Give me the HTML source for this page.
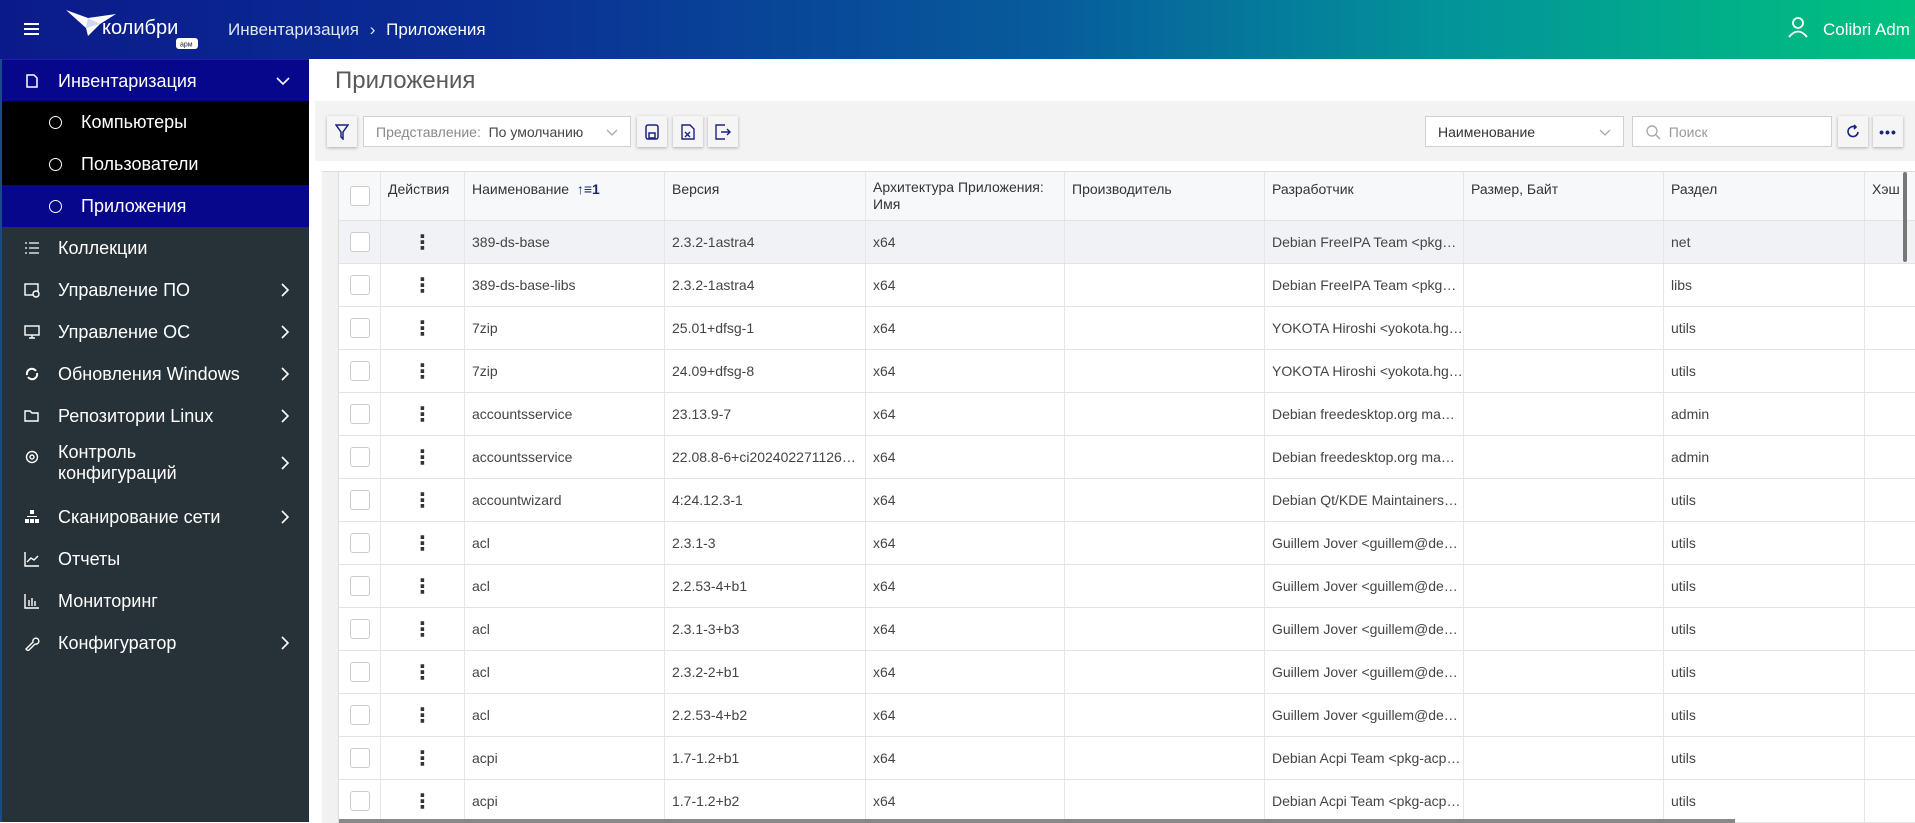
<!DOCTYPE html>
<html><head><meta charset="utf-8"><style>
*{box-sizing:border-box;margin:0;padding:0}
body{width:1915px;height:822px;overflow:hidden;font-family:"Liberation Sans","DejaVu Sans",sans-serif;background:#fff;position:relative}
.hdr{position:absolute;left:0;top:0;width:1915px;height:59px;background:linear-gradient(90deg,#0b1a8a 0%,#0a2e94 25%,#075c9c 55%,#03929a 75%,#00c27e 100%);color:#fff}
.side{position:absolute;left:0;top:59px;width:309px;height:763px;background:#263238;color:#fff;border-left:2px solid #1a4a8a}
.it{position:absolute;left:0;width:307px;height:42px;font-size:18px;display:flex;align-items:center;padding-left:56px}
.it .ic{position:absolute;left:22px;top:50%;transform:translateY(-50%);width:16px;height:16px}
.it .ch{position:absolute;left:278px;top:50%;transform:translateY(-50%);width:10px;height:16px}
.sub{padding-left:79px}
.sub:before{content:"";position:absolute;left:47px;top:15px;width:11px;height:11px;border:1.6px solid #fff;border-radius:50%}
.tb{position:absolute;left:315px;top:101px;width:1600px;height:60px;background:#f3f3f3}
.btn{position:absolute;top:116px;width:30px;height:31px;background:#f5f5f5;box-shadow:0 1px 3px rgba(0,0,0,.3);display:flex;align-items:center;justify-content:center}
.inp{position:absolute;top:116px;height:31px;background:#fff;border:1px solid #d0d0d0;font-size:14px;color:#444;display:flex;align-items:center;padding-left:12px}
.tbl{position:absolute;left:322px;top:171px;width:1593px;height:651px;border-top:1px solid #ddd}
.row{position:absolute;left:17px;width:1576px;height:43px;border-bottom:1px solid #e3e3e3;font-size:14px;color:#444}
.c{position:absolute;top:0;height:100%;border-right:1px solid #e6e6e6;padding-left:7px;display:flex;align-items:center;white-space:nowrap;overflow:hidden}
.hr .c{align-items:flex-start;padding-top:9px}
.cb{width:20px;height:20px;border:1px solid #ccc;border-radius:3px;background:#fff}
.dots{font-size:20px;font-weight:bold;color:#333}
</style></head><body>
<div class="hdr">
 <div style="position:absolute;left:24px;top:23px;width:15px;height:2px;background:#fff;box-shadow:0 5px 0 #fff,0 10px 0 #fff"></div>
 <svg style="position:absolute;left:66px;top:8px" width="136" height="42" viewBox="0 0 136 42"><path d="M0 2 L22 10 L50 6 L34 16 L22 28 L20 20 Z" fill="#fff"/><path d="M22 10 L34 16 L20 20Z" fill="#cfd8f0"/><text x="36" y="26" font-size="20" fill="#fff" font-family="Liberation Sans, sans-serif">колибри</text><rect x="110" y="30" width="22" height="11" rx="3" fill="#fff"/><text x="114" y="38.5" font-size="7" fill="#223">арм</text></svg>
 <div style="position:absolute;left:228px;top:20px;font-size:17px;color:#dfe6f5">Инвентаризация <span style="margin:0 6px">&#8250;</span> <span style="color:#fff">Приложения</span></div>
 <svg style="position:absolute;left:1787px;top:16px" width="22" height="22" viewBox="0 0 22 22" fill="none" stroke="#fff" stroke-width="1.8"><circle cx="11" cy="7" r="5"/><path d="M2 21 Q11 10 20 21"/></svg>
 <div style="position:absolute;left:1823px;top:20px;font-size:17px;color:#fff">Colibri Adm</div>
</div>
<div class="side">
 <div class="it" style="top:1px;background:#07078c"><svg class="ic" viewBox="0 0 16 16" fill="none" stroke="#fff" stroke-width="1.5"><path d="M3 2h7l3 3v9H3z"/></svg>Инвентаризация<svg style="position:absolute;left:274px;top:16px" width="14" height="10" viewBox="0 0 14 10" fill="none" stroke="#fff" stroke-width="1.6"><path d="M1 2l6 6 6-6"/></svg></div>
 <div style="position:absolute;left:0;top:42px;width:307px;height:84px;background:#000"></div>
 <div class="it sub" style="top:42px">Компьютеры</div>
 <div class="it sub" style="top:84px">Пользователи</div>
 <div class="it sub" style="top:126px;background:#07078c">Приложения</div>
 <div class="it" style="top:168px"><svg class="ic" viewBox="0 0 16 16" fill="none" stroke="#fff" stroke-width="1.3"><path d="M1 3h2M5 3h10M1 8h2M5 8h10M1 13h2M5 13h10"/></svg>Коллекции</div>
 <div class="it" style="top:210px"><svg class="ic" viewBox="0 0 16 16" fill="none" stroke="#fff" stroke-width="1.4"><rect x="1" y="2" width="13" height="11"/><circle cx="12" cy="12" r="3" fill="#263238"/></svg>Управление ПО<svg class="ch" viewBox="0 0 10 16" fill="none" stroke="#fff" stroke-width="1.6"><path d="M2 2l6 6-6 6"/></svg></div>
 <div class="it" style="top:252px"><svg class="ic" viewBox="0 0 16 16" fill="none" stroke="#fff" stroke-width="1.4"><rect x="1" y="2" width="14" height="9"/><path d="M5 14h6M8 11v3"/></svg>Управление ОС<svg class="ch" viewBox="0 0 10 16" fill="none" stroke="#fff" stroke-width="1.6"><path d="M2 2l6 6-6 6"/></svg></div>
 <div class="it" style="top:294px"><svg class="ic" viewBox="0 0 16 16" fill="none" stroke="#fff" stroke-width="2"><path d="M3 9a5 5 0 0 1 9-4M13 7a5 5 0 0 1-9 4"/></svg>Обновления Windows<svg class="ch" viewBox="0 0 10 16" fill="none" stroke="#fff" stroke-width="1.6"><path d="M2 2l6 6-6 6"/></svg></div>
 <div class="it" style="top:336px"><svg class="ic" viewBox="0 0 16 16" fill="none" stroke="#fff" stroke-width="1.4"><path d="M1 3h5l2 2h6v8H1z"/></svg>Репозитории Linux<svg class="ch" viewBox="0 0 10 16" fill="none" stroke="#fff" stroke-width="1.6"><path d="M2 2l6 6-6 6"/></svg></div>
 <div class="it" style="top:378px;height:52px;line-height:21px"><svg class="ic" style="top:12px;transform:none" viewBox="0 0 16 16" fill="none" stroke="#fff" stroke-width="1.4"><circle cx="8" cy="8" r="5.5"/><circle cx="8" cy="8" r="2"/></svg>Контроль<br>конфигураций<svg class="ch" viewBox="0 0 10 16" fill="none" stroke="#fff" stroke-width="1.6"><path d="M2 2l6 6-6 6"/></svg></div>
 <div class="it" style="top:437px"><svg class="ic" viewBox="0 0 16 16" fill="#fff"><rect x="6" y="1" width="4" height="4"/><rect x="1" y="10" width="4" height="4"/><rect x="6" y="10" width="4" height="4"/><rect x="11" y="10" width="4" height="4"/><rect x="3" y="7" width="10" height="1"/></svg>Сканирование сети<svg class="ch" viewBox="0 0 10 16" fill="none" stroke="#fff" stroke-width="1.6"><path d="M2 2l6 6-6 6"/></svg></div>
 <div class="it" style="top:479px"><svg class="ic" viewBox="0 0 16 16" fill="none" stroke="#fff" stroke-width="1.4"><path d="M1 1v14h14M3 11l4-4 3 2 4-4"/></svg>Отчеты</div>
 <div class="it" style="top:521px"><svg class="ic" viewBox="0 0 16 16" fill="none" stroke="#fff" stroke-width="1.4"><path d="M1 1v14h14M5 13V7M8 13V5M11 13V8"/></svg>Мониторинг</div>
 <div class="it" style="top:563px"><svg class="ic" viewBox="0 0 16 16" fill="none" stroke="#fff" stroke-width="1.4"><path d="M2 14l7-7a3 3 0 1 1 2 2l-7 7z"/></svg>Конфигуратор<svg class="ch" viewBox="0 0 10 16" fill="none" stroke="#fff" stroke-width="1.6"><path d="M2 2l6 6-6 6"/></svg></div>
</div>
<div style="position:absolute;left:335px;top:67px;font-size:24px;color:#5a5a5a">Приложения</div>
<div class="tb"></div>
<div class="btn" style="left:327px"><svg width="14" height="16" viewBox="0 0 14 16" fill="none" stroke="#1a237e" stroke-width="1.5"><path d="M1 1h12L8 8v7L6 13V8z"/></svg></div>
<div class="inp" style="left:363px;width:268px"><span style="color:#888">Представление:</span>&nbsp;&nbsp;По умолчанию<svg style="position:absolute;right:12px;top:12px" width="12" height="8" viewBox="0 0 12 8" fill="none" stroke="#aaa" stroke-width="1.3"><path d="M1 1l5 5 5-5"/></svg></div>
<div class="btn" style="left:637px"><svg width="14" height="16" viewBox="0 0 14 16" fill="none" stroke="#1a237e" stroke-width="1.5"><rect x="1" y="1" width="12" height="14" rx="2"/><rect x="4" y="9" width="6" height="5"/></svg></div>
<div class="btn" style="left:673px"><svg width="14" height="16" viewBox="0 0 14 16" fill="none" stroke="#1a237e" stroke-width="1.4"><path d="M1 1h8l4 4v10H1z"/><path d="M4 8l5 5M9 8l-5 5"/></svg></div>
<div class="btn" style="left:708px"><svg width="16" height="16" viewBox="0 0 16 16" fill="none" stroke="#1a237e" stroke-width="1.4"><path d="M10 1H1v14h9M6 8h9M12 5l3 3-3 3"/></svg></div>
<div class="inp" style="left:1425px;width:199px;color:#333">Наименование<svg style="position:absolute;right:12px;top:12px" width="12" height="8" viewBox="0 0 12 8" fill="none" stroke="#aaa" stroke-width="1.3"><path d="M1 1l5 5 5-5"/></svg></div>
<div class="inp" style="left:1632px;width:200px;color:#999"><svg width="16" height="16" viewBox="0 0 16 16" fill="none" stroke="#aaa" stroke-width="1.4"><circle cx="7" cy="7" r="5"/><path d="M11 11l4 4"/></svg>&nbsp;&nbsp;Поиск</div>
<div class="btn" style="left:1838px"><svg width="14" height="16" viewBox="0 0 14 16" fill="none" stroke="#1a237e" stroke-width="1.6"><path d="M12 8a5 5 0 1 1-3-5M8 1l2 2-2 2"/></svg></div>
<div class="btn" style="left:1873px;font-weight:bold;color:#1a237e;font-size:14px;letter-spacing:1px">•••</div>
<div class="tbl">
 <div style="position:absolute;left:0;top:0;width:17px;height:651px;background:#f1f1f1;border-right:1px solid #ddd"></div>
 <div class="row hr" style="top:0;height:49px;background:#f7f8fa;font-size:14px;color:#333">
  <div class="c" style="left:0;width:42px;justify-content:center;padding:0;align-items:center"><div class="cb"></div></div>
  <div class="c" style="left:42px;width:84px">Действия</div>
  <div class="c" style="left:126px;width:200px">Наименование&nbsp;&nbsp;<b style="color:#1a237e">&#8593;&#8801;1</b></div>
  <div class="c" style="left:326px;width:201px">Версия</div>
  <div class="c" style="left:527px;width:199px;white-space:normal;line-height:17px;padding-top:7px">Архитектура Приложения: Имя</div>
  <div class="c" style="left:726px;width:200px">Производитель</div>
  <div class="c" style="left:926px;width:199px">Разработчик</div>
  <div class="c" style="left:1125px;width:200px">Размер, Байт</div>
  <div class="c" style="left:1325px;width:201px">Раздел</div>
  <div class="c" style="left:1526px;width:50px;border:0">Хэш</div>
 </div>
 <div id="rows"></div>
 <div style="position:absolute;left:1581px;top:0;width:4px;height:90px;background:#777;border-radius:2px"></div>
 <div style="position:absolute;left:17px;top:647px;width:1396px;height:4px;background:#888"></div>
</div>
<script>
var d=[["389-ds-base","2.3.2-1astra4","Debian FreeIPA Team &lt;pkg…","net"],["389-ds-base-libs","2.3.2-1astra4","Debian FreeIPA Team &lt;pkg…","libs"],["7zip","25.01+dfsg-1","YOKOTA Hiroshi &lt;yokota.hg…","utils"],["7zip","24.09+dfsg-8","YOKOTA Hiroshi &lt;yokota.hg…","utils"],["accountsservice","23.13.9-7","Debian freedesktop.org ma…","admin"],["accountsservice","22.08.8-6+ci202402271126…","Debian freedesktop.org ma…","admin"],["accountwizard","4:24.12.3-1","Debian Qt/KDE Maintainers…","utils"],["acl","2.3.1-3","Guillem Jover &lt;guillem@de…","utils"],["acl","2.2.53-4+b1","Guillem Jover &lt;guillem@de…","utils"],["acl","2.3.1-3+b3","Guillem Jover &lt;guillem@de…","utils"],["acl","2.3.2-2+b1","Guillem Jover &lt;guillem@de…","utils"],["acl","2.2.53-4+b2","Guillem Jover &lt;guillem@de…","utils"],["acpi","1.7-1.2+b1","Debian Acpi Team &lt;pkg-acp…","utils"],["acpi","1.7-1.2+b2","Debian Acpi Team &lt;pkg-acp…","utils"]];
var h="";d.forEach(function(r,i){h+='<div class="row" style="top:'+(49+i*43)+'px;'+(i==0?'background:#f0f2f5':'')+'"><div class="c" style="left:0;width:42px;justify-content:center;padding:0"><div class="cb"></div></div><div class="c" style="left:42px;width:84px;justify-content:center;padding:0"><span class="dots">&#8942;</span></div><div class="c" style="left:126px;width:200px">'+r[0]+'</div><div class="c" style="left:326px;width:201px">'+r[1]+'</div><div class="c" style="left:527px;width:199px">x64</div><div class="c" style="left:726px;width:200px"></div><div class="c" style="left:926px;width:199px">'+r[2]+'</div><div class="c" style="left:1125px;width:200px"></div><div class="c" style="left:1325px;width:201px">'+r[3]+'</div></div>';});
document.getElementById("rows").outerHTML=h;
</script>
</body></html>
